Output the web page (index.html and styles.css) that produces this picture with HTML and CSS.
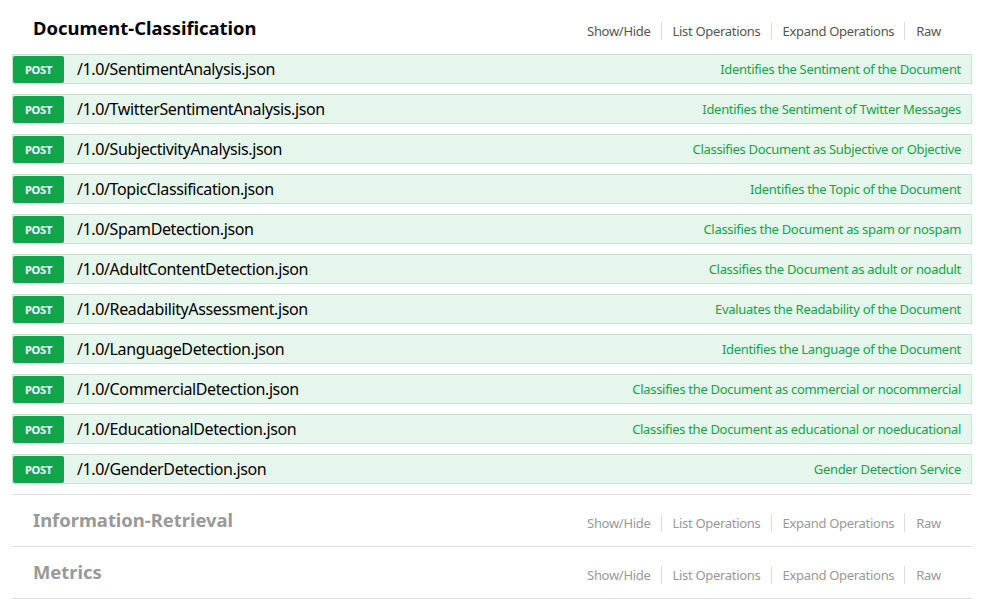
FILE: index.html
```html
<!DOCTYPE html>
<html>
<head>
<meta charset="utf-8">
<link rel="stylesheet" href="styles.css">
</head>
<body>
<ul class="resources">
  <li class="resource">
    <div class="heading">
      <h2 class="title">Document-Classification</h2>
      <ul class="options">
        <li>Show/Hide</li>
        <li>List Operations</li>
        <li>Expand Operations</li>
        <li>Raw</li>
      </ul>
    </div>
    <ul class="operations">
      <li class="op"><span class="method">POST</span><span class="path">/1.0/SentimentAnalysis.json</span><span class="summary">Identifies the Sentiment of the Document</span></li>
      <li class="op"><span class="method">POST</span><span class="path">/1.0/TwitterSentimentAnalysis.json</span><span class="summary">Identifies the Sentiment of Twitter Messages</span></li>
      <li class="op"><span class="method">POST</span><span class="path">/1.0/SubjectivityAnalysis.json</span><span class="summary">Classifies Document as Subjective or Objective</span></li>
      <li class="op"><span class="method">POST</span><span class="path">/1.0/TopicClassification.json</span><span class="summary">Identifies the Topic of the Document</span></li>
      <li class="op"><span class="method">POST</span><span class="path">/1.0/SpamDetection.json</span><span class="summary">Classifies the Document as spam or nospam</span></li>
      <li class="op"><span class="method">POST</span><span class="path">/1.0/AdultContentDetection.json</span><span class="summary">Classifies the Document as adult or noadult</span></li>
      <li class="op"><span class="method">POST</span><span class="path">/1.0/ReadabilityAssessment.json</span><span class="summary">Evaluates the Readability of the Document</span></li>
      <li class="op"><span class="method">POST</span><span class="path">/1.0/LanguageDetection.json</span><span class="summary">Identifies the Language of the Document</span></li>
      <li class="op"><span class="method">POST</span><span class="path">/1.0/CommercialDetection.json</span><span class="summary">Classifies the Document as commercial or nocommercial</span></li>
      <li class="op"><span class="method">POST</span><span class="path">/1.0/EducationalDetection.json</span><span class="summary">Classifies the Document as educational or noeducational</span></li>
      <li class="op"><span class="method">POST</span><span class="path">/1.0/GenderDetection.json</span><span class="summary">Gender Detection Service</span></li>
    </ul>
  </li>
  <li class="resource collapsed">
    <div class="heading">
      <h2 class="title">Information-Retrieval</h2>
      <ul class="options">
        <li>Show/Hide</li>
        <li>List Operations</li>
        <li>Expand Operations</li>
        <li>Raw</li>
      </ul>
    </div>
  </li>
  <li class="resource collapsed">
    <div class="heading">
      <h2 class="title">Metrics</h2>
      <ul class="options">
        <li>Show/Hide</li>
        <li>List Operations</li>
        <li>Expand Operations</li>
        <li>Raw</li>
      </ul>
    </div>
  </li>
</ul>
</body>
</html>
```
FILE: styles.css
```css
html, body {
  margin: 0;
  padding: 0;
  background: #fff;
  font-family: "Noto Sans", "Open Sans", sans-serif;
}
ul {
  list-style: none;
  margin: 0;
  padding: 0;
}
.resources {
  padding: 3px 15px 0 12px;
}
.resource {
  border-bottom: 1px solid #ddd;
}
.heading {
  height: 51px;
  display: flex;
  align-items: center;
  justify-content: space-between;
  padding: 0 31px 0 21px;
}
.title {
  margin: 0 0 2px;
  font-size: 18.4px;
  font-weight: 700;
  color: #000;
}
.collapsed .title {
  color: #999;
}
.options {
  display: flex;
  align-items: center;
  margin-top: 5px;
}
.options li {
  font-size: 13px;
  letter-spacing: -0.3px;
  color: #555;
  padding: 0 10px 0 11px;
  line-height: 18px;
  border-left: 1px solid #ddd;
}
.options li:first-child {
  border-left: none;
}
.options li:last-child {
  padding-right: 0;
}
.collapsed .options li {
  color: #999;
}
.op {
  display: flex;
  align-items: center;
  height: 28px;
  margin-bottom: 10px;
  background: #e7f6ec;
  border: 1px solid #c3e8d1;
}
.method {
  width: 51px;
  height: 27px;
  display: flex;
  align-items: center;
  justify-content: center;
  background: #10a54a;
  color: #fff;
  font-size: 11px;
  font-weight: 700;
  letter-spacing: -0.2px;
  border-radius: 2px;
}
.path {
  flex: 1;
  padding-left: 13px;
  font-size: 16px;
  letter-spacing: -0.38px;
  color: #000;
}
.summary {
  padding-right: 10px;
  font-size: 13px;
  letter-spacing: -0.31px;
  color: #10a54a;
}
```
